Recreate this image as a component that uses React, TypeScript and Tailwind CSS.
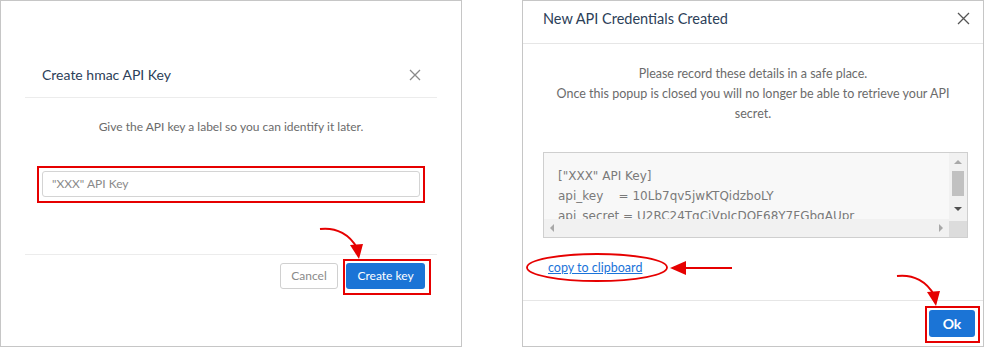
import React from "react";

const font = { fontFamily: "Lato, 'Open Sans', sans-serif" };

function ArrowDown({ className }: { className: string }) {
  return (
    <svg className={`pointer-events-none absolute ${className}`} width="50" height="38" viewBox="0 0 50 38" fill="none">
      <path d="M3 4 C 20 2, 33 10, 40 23" stroke="#e60000" strokeWidth="2" />
      <polygon points="33,20 46,19 42,34" fill="#e60000" />
    </svg>
  );
}

function CreateKeyDialog() {
  return (
    <div className="relative h-[347px] w-[462px] shrink-0 border border-[#c6c6c6] bg-white" style={font}>
      <div className="mx-[24px] mt-[51px]">
        <div className="flex h-[46px] items-center justify-between border-b border-[#ececec] pl-[17px] pr-[16px]">
          <h2 className="text-[14px] text-[#2c4058]">Create hmac API Key</h2>
          <svg width="12" height="12" viewBox="0 0 12 12">
            <path d="M1 1 L11 11 M11 1 L1 11" stroke="#8a8a8a" strokeWidth="1.3" fill="none" />
          </svg>
        </div>
        <p className="mt-[20px] text-center text-[12px] text-[#6b6b6b]">Give the API key a label so you can identify it later.</p>
        <div className="mt-[35px] px-[17px]">
          <div className="flex h-[26px] items-center rounded-[3px] border border-[#d4d4d4] px-[9px] text-[12px] text-[#8a8a8a]">"XXX" API Key</div>
        </div>
        <div className="mt-[57px] flex justify-end gap-[8px] border-t border-[#ececec] pr-[12px] pt-[8px]">
          <button type="button" className="h-[26px] w-[58px] rounded-[3px] border border-[#d0d0d0] bg-white font-['Lato'] text-[12px] text-[#8a8a8a]">Cancel</button>
          <button type="button" className="h-[26px] w-[79px] rounded-[3px] bg-[#1b74d6] font-['Lato'] text-[12px] text-white">Create key</button>
        </div>
      </div>

      <div className="pointer-events-none absolute left-[36px] top-[165px] h-[37px] w-[388px] border-2 border-[#e60000]" />
      <div className="pointer-events-none absolute left-[342px] top-[258px] h-[36px] w-[88px] border-2 border-[#e60000]" />
      <ArrowDown className="left-[316px] top-[224px]" />
    </div>
  );
}

function CredentialsDialog() {
  return (
    <div className="relative h-[347px] w-[462px] shrink-0 border border-[#c6c6c6] bg-white" style={font}>
      <div className="flex h-[43px] items-start justify-between border-b border-[#e6e6e6] pl-[20px] pr-[13px] pt-[7px]">
        <h2 className="text-[14.5px] text-[#2c4058]">New API Credentials Created</h2>
        <svg className="mt-[4px]" width="13" height="13" viewBox="0 0 13 13">
          <path d="M1 1 L12 12 M12 1 L1 12" stroke="#555" strokeWidth="1.3" fill="none" />
        </svg>
      </div>
      <div className="h-[256px] px-[20px] pt-[20px]">
        <p className="text-center text-[12.5px] leading-[20px] text-[#6b6b6b]">
          Please record these details in a safe place.
          <br />
          Once this popup is closed you will no longer be able to retrieve your API
          <br />
          secret.
        </p>
        <div className="mt-[28px] flex h-[86px] w-[425px] border border-[#cfcfcf] bg-[#f8f8f8]">
          <div className="flex flex-1 flex-col">
            <div className="h-[66px] overflow-hidden whitespace-pre pl-[14px] pt-[13px] font-['DejaVu_Sans'] text-[12px] leading-[20px] text-[#7a7a7a]">
              {"[\"XXX\" API Key]\napi_key    = 10Lb7qv5jwKTQidzboLY\napi_secret = U2RC24TqCiVpJcDQF68Y7FGbqAUpr"}
            </div>
            <div className="flex h-[18px] items-center justify-between bg-[#f1f1f1] px-[6px]">
              <span className="h-0 w-0 border-y-[4px] border-r-[4px] border-y-transparent border-r-[#a8a8a8]" />
              <span className="h-0 w-0 border-y-[4px] border-l-[4px] border-y-transparent border-l-[#a8a8a8]" />
            </div>
          </div>
          <div className="flex w-[18px] flex-col bg-[#f1f1f1]">
            <div className="flex h-[18px] items-center justify-center">
              <span className="h-0 w-0 border-x-[4px] border-b-[4px] border-x-transparent border-b-[#a8a8a8]" />
            </div>
            <div className="mx-[3px] h-[25px] bg-[#c1c1c1]" />
            <div className="flex h-[25px] items-center justify-center">
              <span className="h-0 w-0 border-x-[4px] border-t-[4px] border-x-transparent border-t-[#505050]" />
            </div>
            <div className="flex-1 bg-[#dcdcdc]" />
          </div>
        </div>
        <div className="mt-[21px] pl-[5px] text-[12.5px] leading-[18px]">
          <a className="text-[#1a73d9] underline">copy to clipboard</a>
        </div>
      </div>
      <div className="flex justify-end border-t border-[#e6e6e6] pr-[8px] pt-[9px]">
        <button type="button" className="h-[27px] w-[46px] rounded-[3px] bg-[#1b74d6] font-['Lato'] text-[14px] font-bold text-white">Ok</button>
      </div>

      <svg className="pointer-events-none absolute left-[2px] top-[251px]" width="146" height="31" viewBox="0 0 146 31" fill="none">
        <ellipse cx="72" cy="15.5" rx="70" ry="13.5" stroke="#e60000" strokeWidth="1.8" />
      </svg>
      <svg className="pointer-events-none absolute left-[147px] top-[259px]" width="64" height="16" viewBox="0 0 64 16" fill="none">
        <path d="M12 8 L62 8" stroke="#e60000" strokeWidth="2" />
        <polygon points="0,8 16,1 16,15" fill="#e60000" />
      </svg>
      <div className="pointer-events-none absolute left-[402px] top-[305px] h-[37px] w-[55px] border-2 border-[#e60000]" />
      <ArrowDown className="left-[371px] top-[271px]" />
    </div>
  );
}

export default function App() {
  return (
    <div className="flex h-[347px] w-[984px] justify-between bg-white">
      <CreateKeyDialog />
      <CredentialsDialog />
    </div>
  );
}
